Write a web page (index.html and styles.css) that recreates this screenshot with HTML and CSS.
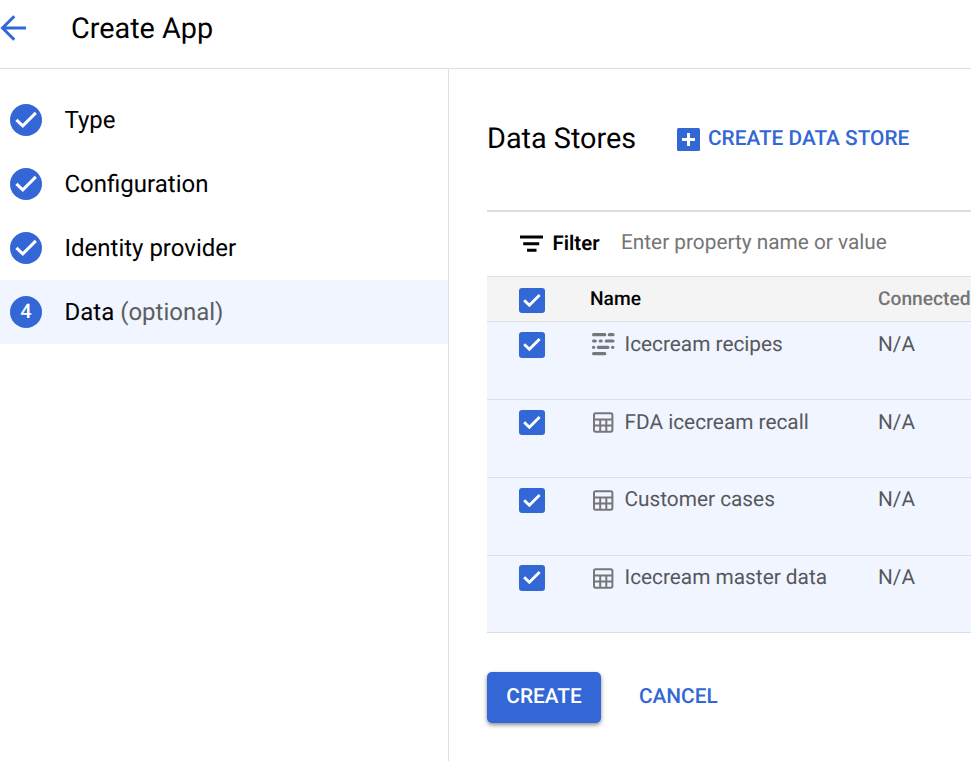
FILE: index.html
```html
<!DOCTYPE html>
<html lang="en">
<head>
<meta charset="utf-8">
<title>Create App</title>
<link rel="stylesheet" href="styles.css">
</head>
<body>
<svg class="defs" aria-hidden="true">
  <symbol id="done" viewBox="0 0 24 24"><path d="M2.4 11.8 8.8 17.9 21.8 4.9" fill="none" stroke="#fff" stroke-width="3"/></symbol>
  <symbol id="check" viewBox="0 0 24 24"><path d="M2.6 11.1 8.8 17.2 21.2 4.7" fill="none" stroke="#fff" stroke-width="3.4"/></symbol>
  <symbol id="table" viewBox="0 0 22 22"><g fill="none" stroke="#75777b" stroke-width="2"><rect x="2" y="1.3" width="18.4" height="18.4" rx="1.6"/><path d="M2 7.4h18M2 13.6h18M8.2 7.4v12.3M14.3 7.4v12.3"/></g></symbol>
  <symbol id="doc" viewBox="0 0 24 24"><path d="M2.6 2.7h11.2M18.4 2.7h3.6M2.6 9h1.7M9.2 9h1M15.3 9h6.7M2.5 15.3h.2M7.3 15.3h9.6M21.6 15.3h.2M2.6 21.7h11.2" fill="none" stroke="#75777b" stroke-width="3.2" stroke-linecap="round"/></symbol>
</svg>
<header class="topbar">
  <svg class="back" viewBox="0 0 28 28"><path d="M26 14H3M14.3 2.2 2.5 14l11.8 11.8" fill="none" stroke="#3367d6" stroke-width="3"/></svg>
  <h1>Create App</h1>
</header>
<div class="layout">
  <nav class="steps">
    <div class="step"><span class="dot"><svg><use href="#done"/></svg></span><span class="label">Type</span></div>
    <div class="step"><span class="dot"><svg><use href="#done"/></svg></span><span class="label">Configuration</span></div>
    <div class="step"><span class="dot"><svg><use href="#done"/></svg></span><span class="label">Identity provider</span></div>
    <div class="step active"><span class="dot number">4</span><span class="label">Data <em>(optional)</em></span></div>
  </nav>
  <main>
    <div class="heading">
      <h2>Data Stores</h2>
      <svg class="plus" viewBox="0 0 23 23"><rect width="23" height="23" rx="1.5" fill="#3367d6"/><path d="M11.5 5v13M5 11.5h13" stroke="#fff" stroke-width="3"/></svg>
      <span class="link">CREATE DATA STORE</span>
    </div>
    <div class="filter">
      <svg viewBox="0 0 24 18"><path d="M0 2h23M3.2 8.7h16M7 15.2h9.5" stroke="#000" stroke-width="3"/></svg>
      <b>Filter</b><span class="hint">Enter property name or value</span>
    </div>
    <div class="table">
      <div class="row head"><span class="box"><svg><use href="#check"/></svg></span><span class="name">Name</span><span class="conn">Connected</span></div>
      <div class="row"><span class="box"><svg><use href="#check"/></svg></span><span class="name"><svg class="doc"><use href="#doc"/></svg>Icecream recipes</span><span class="conn">N/A</span></div>
      <div class="row"><span class="box short"><svg><use href="#check"/></svg></span><span class="name"><svg class="grid"><use href="#table"/></svg>FDA icecream recall</span><span class="conn">N/A</span></div>
      <div class="row third"><span class="box short"><svg><use href="#check"/></svg></span><span class="name"><svg class="grid"><use href="#table"/></svg>Customer cases</span><span class="conn">N/A</span></div>
      <div class="row last"><span class="box"><svg><use href="#check"/></svg></span><span class="name"><svg class="grid"><use href="#table"/></svg>Icecream master data</span><span class="conn">N/A</span></div>
    </div>
    <div class="actions"><button class="primary">CREATE</button><button class="cancel">CANCEL</button></div>
  </main>
</div>
</body>
</html>
```
FILE: styles.css
```css
* { box-sizing: border-box; }
body { margin: 0; height: 778px; overflow: hidden; background: #fff; color: #000; font-family: Roboto, sans-serif; white-space: nowrap; text-rendering: geometricPrecision; }
svg { display: block; flex: none; }
.defs { display: none; }
h1, h2 { margin: 0; font-weight: 400; font-size: 28.8px; }
.topbar { height: 69px; display: flex; border-bottom: 1px solid #dfdfdf; }
.back { width: 28px; height: 28px; margin: 14px 43px 0 0; }
h1 { line-height: 59px; }
.layout { display: flex; height: 692px; }
.steps { width: 449px; flex: none; border-right: 1px solid #dfdfdf; padding-top: 19px; }
.step { height: 64px; display: flex; align-items: center; padding-left: 10px; gap: 22.5px; }
.active { background: #f0f5ff; }
.dot { width: 32px; height: 32px; border-radius: 50%; background: #3367d6; color: #fff; display: flex; align-items: center; justify-content: center; font-size: 20px; font-weight: 500; }
.number { padding-bottom: 2px; }
.dot svg { width: 24px; height: 24px; }
.label { font-size: 24px; }
.label em { font-style: normal; color: #5c5e62; }
main { width: 522px; overflow: hidden; padding-left: 38px; }
.heading { height: 141px; display: flex; align-items: flex-start; padding-top: 49px; }
h2 { line-height: 43px; width: 190px; }
.plus { width: 23px; height: 23px; margin: 10px 8px 0 0; }
.link { color: #3367d6; font-size: 20.8px; font-weight: 500; line-height: 42px; }
.filter { height: 66px; border-top: 2px solid #dfdfdf; display: flex; padding-left: 33px; line-height: 63px; font-size: 20.8px; }
.filter svg { width: 24px; height: 18px; margin: 23px 8.5px 0 0; }
.filter b { font-weight: 600; width: 68.5px; line-height: 62px; font-size: 20.4px; }
.hint { color: #757575; }
.table { border-top: 1px solid #dfdfdf; }
.row { height: 78px; display: flex; background: #f0f5ff; border-bottom: 1px solid #dfdfdf; padding-left: 32px; color: #56585c; font-size: 20.8px; line-height: 47px; }
.row.last { height: 77px; line-height: 45px; }
.row.third { line-height: 45px; }
.row.head { height: 45px; background: #f4f4f4; font-size: 19.2px; line-height: 43px; font-weight: 500; color: #757575; }
.box { width: 26px; height: 26px; margin: 10px 44px 0 0; border-radius: 3px; background: #3367d6; padding: 3px; flex: none; }
.box.short { height: 25px; }
.head .box { height: 25px; margin-top: 11px; }
.last .box { margin-top: 9px; }
.box svg { width: 20px; height: 20px; }
.name { width: 289px; flex: none; display: flex; padding-left: 2px; }
.head .name { color: #000; padding-left: 1px; }
.doc { width: 24px; height: 24px; margin: 10px 9.5px 0 0; }
.grid { width: 22px; height: 22px; margin: 12px 10.5px 0 1px; }
.actions { display: flex; padding-top: 39px; }
button { font: 500 20.8px/48px Roboto, sans-serif; padding: 0 0 1px; border: 0; background: none; color: #3367d6; height: 51px; text-rendering: geometricPrecision; }
.primary { width: 114px; background: #3367d6; color: #fff; border-radius: 5px; box-shadow: 0 2px 4px rgba(0,0,0,.45); }
.cancel { margin-left: 38px; }
```
